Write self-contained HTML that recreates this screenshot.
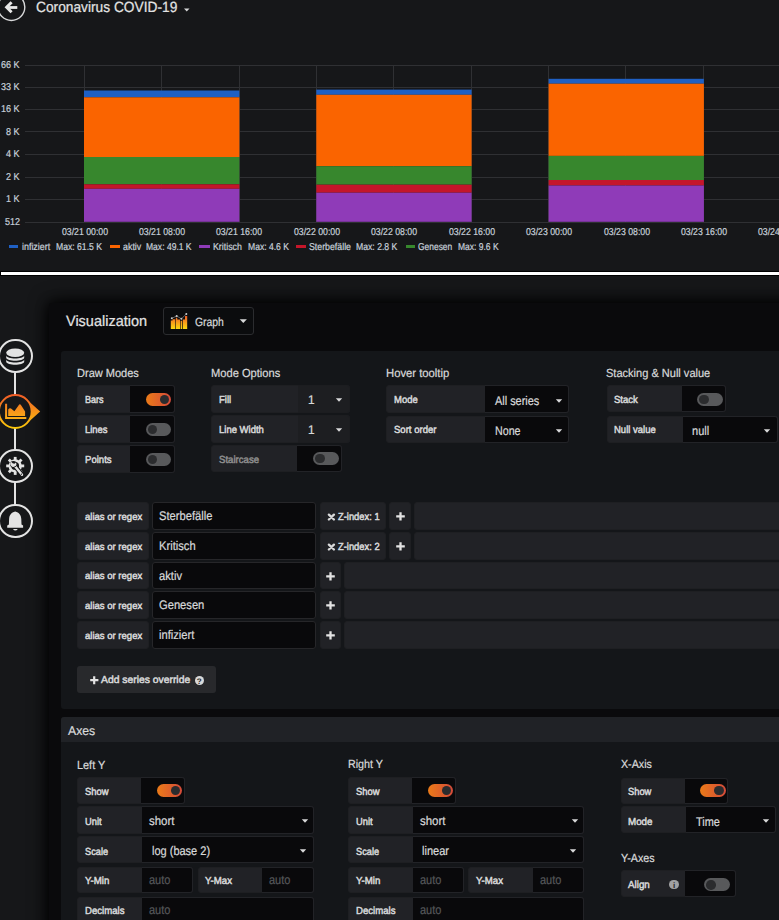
<!DOCTYPE html><html><head><meta charset="utf-8"><style>
*{box-sizing:border-box;margin:0;padding:0}
html,body{width:779px;height:920px;overflow:hidden;background:#161719;font-family:"Liberation Sans", sans-serif;color:#d8d9da}
.abs{position:absolute}
.t{position:absolute;white-space:nowrap;line-height:1;transform-origin:0 0;text-rendering:geometricPrecision}
</style></head><body>
<svg class="abs" style="left:0;top:0" width="40" height="30" viewBox="0 0 40 30"><circle cx="11.4" cy="7.1" r="13.4" fill="none" stroke="#d8d9da" stroke-width="1.4"/><path d="M11.6 2.2 L6.6 7.2 L11.6 12.2" fill="none" stroke="#e8e8e8" stroke-width="2.9" stroke-linejoin="miter" stroke-miterlimit="4"/><path d="M7.5 7.5 H17.3" fill="none" stroke="#e8e8e8" stroke-width="2.8"/></svg>
<div class="t" style="left:35.50px;top:1px;font-size:14.8px;color:#e3e3e3;transform:scaleX(0.9291);-webkit-text-stroke:0.22px #e3e3e3;">Coronavirus COVID-19</div>
<svg class="abs" style="left:183px;top:7px" width="8" height="6"><path d="M1 1.5 L6.5 1.5 L3.75 4.5 Z" fill="#d8d9da"/></svg>
<svg class="abs" style="left:0;top:0" width="779" height="270" shape-rendering="crispEdges"><rect x="25" y="65" width="754" height="1" fill="#2f3033"/><rect x="25" y="87" width="754" height="1" fill="#2f3033"/><rect x="25" y="109" width="754" height="1" fill="#2f3033"/><rect x="25" y="131" width="754" height="1" fill="#2f3033"/><rect x="25" y="154" width="754" height="1" fill="#2f3033"/><rect x="25" y="177" width="754" height="1" fill="#2f3033"/><rect x="25" y="199" width="754" height="1" fill="#2f3033"/><rect x="25" y="222" width="754" height="1" fill="#2f3033"/><rect x="84" y="65" width="1" height="157" fill="#2f3033"/><rect x="161" y="65" width="1" height="157" fill="#2f3033"/><rect x="239" y="65" width="1" height="157" fill="#2f3033"/><rect x="316" y="65" width="1" height="157" fill="#2f3033"/><rect x="393" y="65" width="1" height="157" fill="#2f3033"/><rect x="471" y="65" width="1" height="157" fill="#2f3033"/><rect x="548" y="65" width="1" height="157" fill="#2f3033"/><rect x="625" y="65" width="1" height="157" fill="#2f3033"/><rect x="703" y="65" width="1" height="157" fill="#2f3033"/></svg>
<svg class="abs" style="left:0;top:0" width="779" height="270"><rect x="84" y="90.5" width="155.40" height="6.80" fill="#1F60C4"/><rect x="84" y="97.3" width="155.40" height="59.70" fill="#FA6400"/><rect x="84" y="157" width="155.40" height="27.30" fill="#37872D"/><rect x="84" y="184.3" width="155.40" height="4.50" fill="#C4162A"/><rect x="84" y="188.8" width="155.40" height="33.00" fill="#8F3BB8"/><rect x="316.3" y="89.6" width="155.30" height="5.20" fill="#1F60C4"/><rect x="316.3" y="94.8" width="155.30" height="71.40" fill="#FA6400"/><rect x="316.3" y="166.2" width="155.30" height="18.50" fill="#37872D"/><rect x="316.3" y="184.7" width="155.30" height="8.00" fill="#C4162A"/><rect x="316.3" y="192.7" width="155.30" height="29.10" fill="#8F3BB8"/><rect x="548.6" y="78.8" width="155.30" height="4.90" fill="#1F60C4"/><rect x="548.6" y="83.7" width="155.30" height="72.20" fill="#FA6400"/><rect x="548.6" y="155.9" width="155.30" height="24.10" fill="#37872D"/><rect x="548.6" y="180" width="155.30" height="5.50" fill="#C4162A"/><rect x="548.6" y="185.5" width="155.30" height="36.30" fill="#8F3BB8"/></svg>
<div class="t" style="left:1.39px;top:61px;font-size:10px;color:#c7d0d9;transform:scaleX(0.9000);-webkit-text-stroke:0.22px #c7d0d9;">66 K</div>
<div class="t" style="left:1.39px;top:83px;font-size:10px;color:#c7d0d9;transform:scaleX(0.9000);-webkit-text-stroke:0.22px #c7d0d9;">33 K</div>
<div class="t" style="left:1.39px;top:105px;font-size:10px;color:#c7d0d9;transform:scaleX(0.9000);-webkit-text-stroke:0.22px #c7d0d9;">16 K</div>
<div class="t" style="left:6.39px;top:128px;font-size:10px;color:#c7d0d9;transform:scaleX(0.9000);-webkit-text-stroke:0.22px #c7d0d9;">8 K</div>
<div class="t" style="left:6.39px;top:150px;font-size:10px;color:#c7d0d9;transform:scaleX(0.9000);-webkit-text-stroke:0.22px #c7d0d9;">4 K</div>
<div class="t" style="left:6.39px;top:173px;font-size:10px;color:#c7d0d9;transform:scaleX(0.9000);-webkit-text-stroke:0.22px #c7d0d9;">2 K</div>
<div class="t" style="left:6.39px;top:195px;font-size:10px;color:#c7d0d9;transform:scaleX(0.9000);-webkit-text-stroke:0.22px #c7d0d9;">1 K</div>
<div class="t" style="left:4.89px;top:218px;font-size:10px;color:#c7d0d9;transform:scaleX(0.9000);-webkit-text-stroke:0.22px #c7d0d9;">512</div>
<div class="t" style="left:61.57px;top:228px;font-size:10px;color:#c7d0d9;transform:scaleX(0.8720);-webkit-text-stroke:0.22px #c7d0d9;">03/21 00:00</div>
<div class="t" style="left:139.00px;top:228px;font-size:10px;color:#c7d0d9;transform:scaleX(0.8720);-webkit-text-stroke:0.22px #c7d0d9;">03/21 08:00</div>
<div class="t" style="left:216.43px;top:228px;font-size:10px;color:#c7d0d9;transform:scaleX(0.8720);-webkit-text-stroke:0.22px #c7d0d9;">03/21 16:00</div>
<div class="t" style="left:293.86px;top:228px;font-size:10px;color:#c7d0d9;transform:scaleX(0.8720);-webkit-text-stroke:0.22px #c7d0d9;">03/22 00:00</div>
<div class="t" style="left:371.29px;top:228px;font-size:10px;color:#c7d0d9;transform:scaleX(0.8720);-webkit-text-stroke:0.22px #c7d0d9;">03/22 08:00</div>
<div class="t" style="left:448.72px;top:228px;font-size:10px;color:#c7d0d9;transform:scaleX(0.8720);-webkit-text-stroke:0.22px #c7d0d9;">03/22 16:00</div>
<div class="t" style="left:526.15px;top:228px;font-size:10px;color:#c7d0d9;transform:scaleX(0.8720);-webkit-text-stroke:0.22px #c7d0d9;">03/23 00:00</div>
<div class="t" style="left:603.58px;top:228px;font-size:10px;color:#c7d0d9;transform:scaleX(0.8720);-webkit-text-stroke:0.22px #c7d0d9;">03/23 08:00</div>
<div class="t" style="left:681.01px;top:228px;font-size:10px;color:#c7d0d9;transform:scaleX(0.8720);-webkit-text-stroke:0.22px #c7d0d9;">03/23 16:00</div>
<div class="t" style="left:758.44px;top:228px;font-size:10px;color:#c7d0d9;transform:scaleX(0.8720);-webkit-text-stroke:0.22px #c7d0d9;">03/24 00:00</div>
<div class="abs" style="left:9.2px;top:245.2px;width:9.3px;height:2.6px;background:#1F60C4;"></div>
<div class="t" style="left:22.00px;top:243px;font-size:10px;color:#c7d0d9;transform:scaleX(0.8891);-webkit-text-stroke:0.22px #c7d0d9;">infiziert</div>
<div class="t" style="left:55.90px;top:243px;font-size:10px;color:#c7d0d9;transform:scaleX(0.8615);-webkit-text-stroke:0.22px #c7d0d9;">Max: 61.5 K</div>
<div class="abs" style="left:109.8px;top:245.2px;width:10.0px;height:2.6px;background:#FA6400;"></div>
<div class="t" style="left:122.60px;top:243px;font-size:10px;color:#c7d0d9;transform:scaleX(0.8885);-webkit-text-stroke:0.22px #c7d0d9;">aktiv</div>
<div class="t" style="left:146.20px;top:243px;font-size:10px;color:#c7d0d9;transform:scaleX(0.8540);-webkit-text-stroke:0.22px #c7d0d9;">Max: 49.1 K</div>
<div class="abs" style="left:199.4px;top:245.2px;width:10.2px;height:2.6px;background:#8F3BB8;"></div>
<div class="t" style="left:213.00px;top:243px;font-size:10px;color:#c7d0d9;transform:scaleX(0.8807);-webkit-text-stroke:0.22px #c7d0d9;">Kritisch</div>
<div class="t" style="left:247.60px;top:243px;font-size:10px;color:#c7d0d9;transform:scaleX(0.8571);-webkit-text-stroke:0.22px #c7d0d9;">Max: 4.6 K</div>
<div class="abs" style="left:296.2px;top:245.2px;width:10.2px;height:2.6px;background:#C4162A;"></div>
<div class="t" style="left:309.20px;top:243px;font-size:10px;color:#c7d0d9;transform:scaleX(0.8778);-webkit-text-stroke:0.22px #c7d0d9;">Sterbefälle</div>
<div class="t" style="left:356.40px;top:243px;font-size:10px;color:#c7d0d9;transform:scaleX(0.8654);-webkit-text-stroke:0.22px #c7d0d9;">Max: 2.8 K</div>
<div class="abs" style="left:405.8px;top:245.2px;width:9.1px;height:2.6px;background:#37872D;"></div>
<div class="t" style="left:418.00px;top:243px;font-size:10px;color:#c7d0d9;transform:scaleX(0.8442);-webkit-text-stroke:0.22px #c7d0d9;">Genesen</div>
<div class="t" style="left:457.50px;top:243px;font-size:10px;color:#c7d0d9;transform:scaleX(0.8487);-webkit-text-stroke:0.22px #c7d0d9;">Max: 9.6 K</div>
<div class="abs" style="left:0px;top:271px;width:779px;height:5px;background:#000;"></div>
<div class="abs" style="left:1px;top:272px;width:778px;height:3px;background:#fff;"></div>
<div class="abs" style="left:49px;top:303px;width:760px;height:700px;background:#0a0a0c;box-shadow:0 0 20px #000, 0 0 12px rgba(0,0,0,0.7);border-radius:3px"></div>
<div class="abs" style="left:14.3px;top:373px;width:2px;height:148px;background:#e3e3e3;"></div>
<div class="abs" style="left:-2px;top:339.1px;width:34.6px;height:34.4px;border-radius:50%;border:2px solid #e3e3e3;background:#161719"></div>
<div class="abs" style="left:-2px;top:449.1px;width:34.6px;height:34.4px;border-radius:50%;border:2px solid #e3e3e3;background:#161719"></div>
<div class="abs" style="left:-2px;top:504.1px;width:34.6px;height:34.4px;border-radius:50%;border:2px solid #e3e3e3;background:#161719"></div>
<svg class="abs" style="left:0;top:390px" width="44" height="44" viewBox="0 390 44 44"><defs><linearGradient id="og" gradientUnits="userSpaceOnUse" x1="0" y1="394" x2="0" y2="429"><stop offset="0" stop-color="#f05a28"/><stop offset="1" stop-color="#fbca0a"/></linearGradient><linearGradient id="og2" gradientUnits="userSpaceOnUse" x1="0" y1="403" x2="0" y2="420"><stop offset="0" stop-color="#f47a20"/><stop offset="1" stop-color="#fbb116"/></linearGradient></defs><path d="M26.5 399.3 L40.2 411.5 L26.5 423.7 Z" fill="url(#og)"/><circle cx="15.3" cy="411.5" r="16.4" fill="#161719" stroke="url(#og)" stroke-width="2"/><path d="M5.1 403.8 H7.1 V417.1 H26.3 V419.1 H5.1 Z" fill="url(#og2)"/><path d="M8.2 416 V409.6 Q9.5 407.6 11 408.6 L14.4 411.2 L19.2 404.6 Q20 403.6 20.8 404.8 L25.1 411.6 V416 Z" fill="url(#og2)"/></svg>
<svg class="abs" style="left:0;top:337px" width="36" height="40" viewBox="0 337 36 40"><ellipse cx="15.2" cy="352.7" rx="9" ry="4.3" fill="#e3e3e3"/><path d="M6.2 355.6 C6.8 359.5 23.6 359.5 24.2 355.6 L24.2 357.7 C23.6 361.7 6.8 361.7 6.2 357.7 Z" fill="#e3e3e3"/><path d="M6.2 359.6 C6.8 363.5 23.6 363.5 24.2 359.6 L24.2 361.7 C23.6 365.7 6.8 365.7 6.2 361.7 Z" fill="#e3e3e3"/></svg>
<svg class="abs" style="left:0;top:446px" width="36" height="40" viewBox="0 446 36 40"><rect x="13.80" y="456.90" width="2.8" height="4" fill="#e3e3e3" transform="rotate(0 15.2 465.9)"/><rect x="13.80" y="456.90" width="2.8" height="4" fill="#e3e3e3" transform="rotate(45 15.2 465.9)"/><rect x="13.80" y="456.90" width="2.8" height="4" fill="#e3e3e3" transform="rotate(90 15.2 465.9)"/><rect x="13.80" y="456.90" width="2.8" height="4" fill="#e3e3e3" transform="rotate(135 15.2 465.9)"/><rect x="13.80" y="456.90" width="2.8" height="4" fill="#e3e3e3" transform="rotate(180 15.2 465.9)"/><rect x="13.80" y="456.90" width="2.8" height="4" fill="#e3e3e3" transform="rotate(225 15.2 465.9)"/><rect x="13.80" y="456.90" width="2.8" height="4" fill="#e3e3e3" transform="rotate(270 15.2 465.9)"/><rect x="13.80" y="456.90" width="2.8" height="4" fill="#e3e3e3" transform="rotate(315 15.2 465.9)"/><circle cx="15.2" cy="465.9" r="6.6" fill="#e3e3e3"/><circle cx="15.2" cy="465.9" r="3.9" fill="#161719"/><path d="M13.6 464.4 L22 474.8" stroke="#161719" stroke-width="4.6" stroke-linecap="round"/><path d="M13.6 464.4 L22 474.8" stroke="#e3e3e3" stroke-width="2.4" stroke-linecap="round"/><circle cx="13.4" cy="464.2" r="3.3" fill="#161719"/><path d="M11.2 461.8 A3 3 0 1 0 15.9 462.4 L14.4 463.8 L12.6 463.2 Z" fill="#e3e3e3"/><circle cx="21.4" cy="474.2" r="0.6" fill="#161719"/></svg>
<svg class="abs" style="left:0;top:501px" width="36" height="40" viewBox="0 501 36 40"><path d="M15.2 511.4 C11.2 512.4 9.3 515 9.1 519 L8.9 524.4 L7.2 525.4 L7.2 527.8 L23.1 527.8 L23.1 525.4 L21.5 524.4 L21.3 519 C21.1 515 19.2 512.4 15.2 511.4 Z" fill="#e3e3e3"/><path d="M12.9 528.9 L17.8 528.9 Q15.35 532.2 12.9 528.9 Z" fill="#e3e3e3"/></svg>
<div class="t" style="left:65.60px;top:314px;font-size:15px;color:#e3e3e3;transform:scaleX(0.9658);-webkit-text-stroke:0.22px #e3e3e3;">Visualization</div>
<div class="abs" style="left:163px;top:307px;width:91px;height:28px;border:1px solid #2b2c2f;border-radius:3px;background:#0b0c0e"></div>
<svg class="abs" style="left:166px;top:308px" width="26" height="24" viewBox="166 308 26 24"><defs><linearGradient id="gg" gradientUnits="userSpaceOnUse" x1="0" y1="316" x2="0" y2="329"><stop offset="0" stop-color="#f05a28"/><stop offset="0.55" stop-color="#f9a41a"/><stop offset="1" stop-color="#fbd80f"/></linearGradient></defs><path d="M170.8 329 V320.6 H172.5 V319.2 H175.2 V329 Z M175.8 329 V317.8 H177.3 V319.4 H180 V329 Z M180.6 329 V320.8 H182.1 V329 Z M182.8 329 V319.4 H185 V316 H187.2 V329 Z" fill="url(#gg)"/><path d="M171.8 318.3 L176.7 316 L181.4 318.8 L186.3 314" fill="none" stroke="#6e6f71" stroke-width="0.9"/><circle cx="171.8" cy="318.3" r="1" fill="#c8c9ca"/><circle cx="176.7" cy="316" r="1" fill="#c8c9ca"/><circle cx="181.4" cy="318.8" r="1" fill="#c8c9ca"/><circle cx="186.3" cy="314" r="1" fill="#c8c9ca"/></svg>
<div class="t" style="left:194.80px;top:316px;font-size:12px;color:#d8d9da;transform:scaleX(0.8657);-webkit-text-stroke:0.22px #d8d9da;">Graph</div>
<svg class="abs" style="left:239px;top:318px" width="9" height="7"><path d="M0.7 1.3 L7.9 1.3 L4.3 5.1 Z" fill="#d8d9da"/></svg>
<div class="abs" style="left:61px;top:351px;width:730px;height:358px;background:#141619;border-radius:3px"></div>
<div class="t" style="left:77.40px;top:368px;font-size:11.8px;color:#d8d9da;transform:scaleX(0.9341);-webkit-text-stroke:0.22px #d8d9da;">Draw Modes</div>
<div class="t" style="left:211.10px;top:368px;font-size:11.8px;color:#d8d9da;transform:scaleX(0.9428);-webkit-text-stroke:0.22px #d8d9da;">Mode Options</div>
<div class="t" style="left:386.40px;top:368px;font-size:11.8px;color:#d8d9da;transform:scaleX(0.9551);-webkit-text-stroke:0.22px #d8d9da;">Hover tooltip</div>
<div class="t" style="left:606.40px;top:368px;font-size:11.8px;color:#d8d9da;transform:scaleX(0.9352);-webkit-text-stroke:0.22px #d8d9da;">Stacking &amp; Null value</div>
<div class="abs" style="left:77px;top:385.1px;width:98.0px;height:27.6px;border-radius:3px;background:#212226;border:1px solid #1e1f22"></div>
<div class="abs" style="left:130.0px;top:385.1px;width:45.0px;height:27.6px;border-radius:0 3px 3px 0;background:#09090b;border:1px solid #222327;border-left:none"></div>
<div class="t" style="left:85.00px;top:396px;font-size:10.3px;color:#d8d9da;transform:scaleX(0.8783);-webkit-text-stroke:0.5px #d8d9da;">Bars</div>
<div class="abs" style="left:145.8px;top:392.8px;width:25.5px;height:13.3px;border-radius:7px;background:linear-gradient(90deg,#eb7b18,#d44a3a)"></div>
<div class="abs" style="left:159.8px;top:394.7px;width:9.5px;height:9.5px;border-radius:50%;background:#2b2c2e"></div>
<div class="abs" style="left:77px;top:415.1px;width:98.0px;height:27.6px;border-radius:3px;background:#212226;border:1px solid #1e1f22"></div>
<div class="abs" style="left:130.0px;top:415.1px;width:45.0px;height:27.6px;border-radius:0 3px 3px 0;background:#09090b;border:1px solid #222327;border-left:none"></div>
<div class="t" style="left:85.00px;top:426px;font-size:10.3px;color:#d8d9da;transform:scaleX(0.9136);-webkit-text-stroke:0.5px #d8d9da;">Lines</div>
<div class="abs" style="left:145.8px;top:422.8px;width:25.5px;height:13.3px;border-radius:7px;background:#58595b"></div>
<div class="abs" style="left:147.8px;top:424.7px;width:9.5px;height:9.5px;border-radius:50%;background:#2b2c2e"></div>
<div class="abs" style="left:77px;top:445.1px;width:98.0px;height:27.6px;border-radius:3px;background:#212226;border:1px solid #1e1f22"></div>
<div class="abs" style="left:130.0px;top:445.1px;width:45.0px;height:27.6px;border-radius:0 3px 3px 0;background:#09090b;border:1px solid #222327;border-left:none"></div>
<div class="t" style="left:85.00px;top:456px;font-size:10.3px;color:#d8d9da;transform:scaleX(0.9293);-webkit-text-stroke:0.5px #d8d9da;">Points</div>
<div class="abs" style="left:145.8px;top:452.8px;width:25.5px;height:13.3px;border-radius:7px;background:#58595b"></div>
<div class="abs" style="left:147.8px;top:454.7px;width:9.5px;height:9.5px;border-radius:50%;background:#2b2c2e"></div>
<div class="abs" style="left:211px;top:385.2px;width:139.0px;height:27.5px;border-radius:3px;background:#212226;border:1px solid #1e1f22"></div>
<div class="abs" style="left:297.5px;top:385.2px;width:52.5px;height:27.5px;border-radius:0 3px 3px 0;background:#1d1e21;border:1px solid #1c1d20;border-left:none"></div>
<div class="t" style="left:218.50px;top:396px;font-size:10.3px;color:#d8d9da;transform:scaleX(0.9275);-webkit-text-stroke:0.5px #d8d9da;">Fill</div>
<div class="t" style="left:308.40px;top:394px;font-size:12.5px;color:#d8d9da;transform:scaleX(0.9500);-webkit-text-stroke:0.22px #d8d9da;">1</div>
<svg class="abs" style="left:335.2px;top:396.7px" width="8" height="6"><path d="M0.8 1.2 L7.2 1.2 L4 4.8 Z" fill="#d8d9da"/></svg>
<div class="abs" style="left:211px;top:415.2px;width:139.0px;height:27.5px;border-radius:3px;background:#212226;border:1px solid #1e1f22"></div>
<div class="abs" style="left:297.5px;top:415.2px;width:52.5px;height:27.5px;border-radius:0 3px 3px 0;background:#1d1e21;border:1px solid #1c1d20;border-left:none"></div>
<div class="t" style="left:218.50px;top:426px;font-size:10.3px;color:#d8d9da;transform:scaleX(0.9226);-webkit-text-stroke:0.5px #d8d9da;">Line Width</div>
<div class="t" style="left:308.40px;top:424px;font-size:12.5px;color:#d8d9da;transform:scaleX(0.9500);-webkit-text-stroke:0.22px #d8d9da;">1</div>
<svg class="abs" style="left:335.2px;top:426.7px" width="8" height="6"><path d="M0.8 1.2 L7.2 1.2 L4 4.8 Z" fill="#d8d9da"/></svg>
<div class="abs" style="left:211px;top:445.3px;width:130.5px;height:27.2px;border-radius:3px;background:#212226;border:1px solid #1e1f22"></div>
<div class="abs" style="left:297.0px;top:445.3px;width:44.5px;height:27.2px;border-radius:0 3px 3px 0;background:#09090b;border:1px solid #222327;border-left:none"></div>
<div class="t" style="left:218.50px;top:456px;font-size:10.3px;color:#8e8e8e;transform:scaleX(0.9341);-webkit-text-stroke:0.5px #8e8e8e;">Staircase</div>
<div class="abs" style="left:313px;top:451.7px;width:25.5px;height:13.3px;border-radius:7px;background:#58595b"></div>
<div class="abs" style="left:315px;top:453.59999999999997px;width:9.5px;height:9.5px;border-radius:50%;background:#2b2c2e"></div>
<div class="abs" style="left:386.4px;top:385.2px;width:183.1px;height:27.4px;border-radius:3px;background:#212226;border:1px solid #1e1f22"></div>
<div class="abs" style="left:484.8px;top:385.2px;width:84.7px;height:27.4px;border-radius:0 3px 3px 0;background:#09090b;border:1px solid #222327;border-left:none"></div>
<div class="t" style="left:394.10px;top:396px;font-size:10.3px;color:#d8d9da;transform:scaleX(0.9200);-webkit-text-stroke:0.5px #d8d9da;">Mode</div>
<div class="t" style="left:494.80px;top:395px;font-size:12.5px;color:#d8d9da;transform:scaleX(0.8729);-webkit-text-stroke:0.22px #d8d9da;">All series</div>
<svg class="abs" style="left:554.9px;top:397.5px" width="8" height="6"><path d="M0.8 1.2 L7.2 1.2 L4 4.8 Z" fill="#d8d9da"/></svg>
<div class="abs" style="left:386.4px;top:415.5px;width:182.6px;height:27.3px;border-radius:3px;background:#212226;border:1px solid #1e1f22"></div>
<div class="abs" style="left:484.9px;top:415.5px;width:84.1px;height:27.3px;border-radius:0 3px 3px 0;background:#09090b;border:1px solid #222327;border-left:none"></div>
<div class="t" style="left:393.80px;top:426px;font-size:10.3px;color:#d8d9da;transform:scaleX(0.9281);-webkit-text-stroke:0.5px #d8d9da;">Sort order</div>
<div class="t" style="left:494.90px;top:425px;font-size:12.5px;color:#d8d9da;transform:scaleX(0.8555);-webkit-text-stroke:0.22px #d8d9da;">None</div>
<svg class="abs" style="left:555.2px;top:427.6px" width="8" height="6"><path d="M0.8 1.2 L7.2 1.2 L4 4.8 Z" fill="#d8d9da"/></svg>
<div class="abs" style="left:606.9px;top:385.3px;width:119.1px;height:27px;border-radius:3px;background:#212226;border:1px solid #1e1f22"></div>
<div class="abs" style="left:682.0px;top:385.3px;width:44.0px;height:27px;border-radius:0 3px 3px 0;background:#09090b;border:1px solid #222327;border-left:none"></div>
<div class="t" style="left:614.20px;top:396px;font-size:10.3px;color:#d8d9da;transform:scaleX(0.9270);-webkit-text-stroke:0.5px #d8d9da;">Stack</div>
<div class="abs" style="left:697.2px;top:393px;width:25.5px;height:13.3px;border-radius:7px;background:#58595b"></div>
<div class="abs" style="left:699.2px;top:394.9px;width:9.5px;height:9.5px;border-radius:50%;background:#2b2c2e"></div>
<div class="abs" style="left:606.9px;top:415.5px;width:171.6px;height:27.3px;border-radius:3px;background:#212226;border:1px solid #1e1f22"></div>
<div class="abs" style="left:683.1px;top:415.5px;width:95.4px;height:27.3px;border-radius:0 3px 3px 0;background:#09090b;border:1px solid #222327;border-left:none"></div>
<div class="t" style="left:614.10px;top:426px;font-size:10.3px;color:#d8d9da;transform:scaleX(0.9220);-webkit-text-stroke:0.5px #d8d9da;">Null value</div>
<div class="t" style="left:692.30px;top:425px;font-size:12.5px;color:#d8d9da;transform:scaleX(0.8821);-webkit-text-stroke:0.22px #d8d9da;">null</div>
<svg class="abs" style="left:763.4px;top:427.6px" width="8" height="6"><path d="M0.8 1.2 L7.2 1.2 L4 4.8 Z" fill="#d8d9da"/></svg>
<div class="abs" style="left:77px;top:502.1px;width:72px;height:27.5px;border-radius:3px;background:#212226;border:1px solid #1e1f22"></div>
<div class="t" style="left:84.90px;top:513px;font-size:10px;color:#d8d9da;transform:scaleX(0.9529);-webkit-text-stroke:0.5px #d8d9da;">alias or regex</div>
<div class="abs" style="left:152px;top:502.1px;width:164px;height:27.8px;border-radius:3px;background:#09090b;border:1px solid #262629"></div>
<div class="t" style="left:159.20px;top:510px;font-size:12.5px;color:#d8d9da;transform:scaleX(0.8935);-webkit-text-stroke:0.22px #d8d9da;">Sterbefälle</div>
<div class="abs" style="left:320px;top:502.1px;width:66px;height:27.6px;border-radius:3px;background:#212226;border:1px solid #1e1f22"></div>
<svg class="abs" style="left:326.6px;top:512.9px" width="9" height="8" viewBox="0 0 9 8"><path d="M1.9 1.6 L6.9 6.5 M6.9 1.6 L1.9 6.5" stroke="#d8d9da" stroke-width="2.3" stroke-linecap="round"/></svg>
<div class="t" style="left:337.80px;top:513px;font-size:10.3px;color:#d8d9da;transform:scaleX(0.9084);-webkit-text-stroke:0.5px #d8d9da;">Z-index: 1</div>
<div class="abs" style="left:389.2px;top:502.1px;width:21.8px;height:27.6px;border-radius:3px;background:#212226;border:1px solid #1e1f22"></div>
<svg class="abs" style="left:396px;top:512.1px" width="9" height="9" viewBox="0 0 9 9"><path d="M4.5 0.2 V8.6 M0.2 4.4 H8.8" stroke="#e3e3e3" stroke-width="2.3"/></svg>
<div class="abs" style="left:414px;top:502.1px;width:400px;height:27.6px;border-radius:3px;background:#212226;border:1px solid #1e1f22"></div>
<div class="abs" style="left:77px;top:532.0px;width:72px;height:27.5px;border-radius:3px;background:#212226;border:1px solid #1e1f22"></div>
<div class="t" style="left:84.90px;top:543px;font-size:10px;color:#d8d9da;transform:scaleX(0.9529);-webkit-text-stroke:0.5px #d8d9da;">alias or regex</div>
<div class="abs" style="left:152px;top:532.0px;width:164px;height:27.8px;border-radius:3px;background:#09090b;border:1px solid #262629"></div>
<div class="t" style="left:159.20px;top:540px;font-size:12.5px;color:#d8d9da;transform:scaleX(0.8935);-webkit-text-stroke:0.22px #d8d9da;">Kritisch</div>
<div class="abs" style="left:320px;top:532.0px;width:66px;height:27.6px;border-radius:3px;background:#212226;border:1px solid #1e1f22"></div>
<svg class="abs" style="left:326.6px;top:542.8px" width="9" height="8" viewBox="0 0 9 8"><path d="M1.9 1.6 L6.9 6.5 M6.9 1.6 L1.9 6.5" stroke="#d8d9da" stroke-width="2.3" stroke-linecap="round"/></svg>
<div class="t" style="left:337.80px;top:543px;font-size:10.3px;color:#d8d9da;transform:scaleX(0.9084);-webkit-text-stroke:0.5px #d8d9da;">Z-index: 2</div>
<div class="abs" style="left:389.2px;top:532.0px;width:21.8px;height:27.6px;border-radius:3px;background:#212226;border:1px solid #1e1f22"></div>
<svg class="abs" style="left:396px;top:542.0px" width="9" height="9" viewBox="0 0 9 9"><path d="M4.5 0.2 V8.6 M0.2 4.4 H8.8" stroke="#e3e3e3" stroke-width="2.3"/></svg>
<div class="abs" style="left:414px;top:532.0px;width:400px;height:27.6px;border-radius:3px;background:#212226;border:1px solid #1e1f22"></div>
<div class="abs" style="left:77px;top:561.5px;width:72px;height:27.5px;border-radius:3px;background:#212226;border:1px solid #1e1f22"></div>
<div class="t" style="left:84.90px;top:572px;font-size:10px;color:#d8d9da;transform:scaleX(0.9529);-webkit-text-stroke:0.5px #d8d9da;">alias or regex</div>
<div class="abs" style="left:152px;top:561.5px;width:164px;height:27.8px;border-radius:3px;background:#09090b;border:1px solid #262629"></div>
<div class="t" style="left:159.20px;top:570px;font-size:12.5px;color:#d8d9da;transform:scaleX(0.8935);-webkit-text-stroke:0.22px #d8d9da;">aktiv</div>
<div class="abs" style="left:320px;top:561.5px;width:20.8px;height:27.6px;border-radius:3px;background:#212226;border:1px solid #1e1f22"></div>
<svg class="abs" style="left:326.2px;top:571.5px" width="9" height="9" viewBox="0 0 9 9"><path d="M4.5 0.2 V8.6 M0.2 4.4 H8.8" stroke="#e3e3e3" stroke-width="2.3"/></svg>
<div class="abs" style="left:343.7px;top:561.5px;width:470px;height:27.6px;border-radius:3px;background:#212226;border:1px solid #1e1f22"></div>
<div class="abs" style="left:77px;top:591.3px;width:72px;height:27.5px;border-radius:3px;background:#212226;border:1px solid #1e1f22"></div>
<div class="t" style="left:84.90px;top:602px;font-size:10px;color:#d8d9da;transform:scaleX(0.9529);-webkit-text-stroke:0.5px #d8d9da;">alias or regex</div>
<div class="abs" style="left:152px;top:591.3px;width:164px;height:27.8px;border-radius:3px;background:#09090b;border:1px solid #262629"></div>
<div class="t" style="left:159.20px;top:599px;font-size:12.5px;color:#d8d9da;transform:scaleX(0.8935);-webkit-text-stroke:0.22px #d8d9da;">Genesen</div>
<div class="abs" style="left:320px;top:591.3px;width:20.8px;height:27.6px;border-radius:3px;background:#212226;border:1px solid #1e1f22"></div>
<svg class="abs" style="left:326.2px;top:601.3px" width="9" height="9" viewBox="0 0 9 9"><path d="M4.5 0.2 V8.6 M0.2 4.4 H8.8" stroke="#e3e3e3" stroke-width="2.3"/></svg>
<div class="abs" style="left:343.7px;top:591.3px;width:470px;height:27.6px;border-radius:3px;background:#212226;border:1px solid #1e1f22"></div>
<div class="abs" style="left:77px;top:621.3px;width:72px;height:27.5px;border-radius:3px;background:#212226;border:1px solid #1e1f22"></div>
<div class="t" style="left:84.90px;top:632px;font-size:10px;color:#d8d9da;transform:scaleX(0.9529);-webkit-text-stroke:0.5px #d8d9da;">alias or regex</div>
<div class="abs" style="left:152px;top:621.3px;width:164px;height:27.8px;border-radius:3px;background:#09090b;border:1px solid #262629"></div>
<div class="t" style="left:159.20px;top:629px;font-size:12.5px;color:#d8d9da;transform:scaleX(0.8935);-webkit-text-stroke:0.22px #d8d9da;">infiziert</div>
<div class="abs" style="left:320px;top:621.3px;width:20.8px;height:27.6px;border-radius:3px;background:#212226;border:1px solid #1e1f22"></div>
<svg class="abs" style="left:326.2px;top:631.3px" width="9" height="9" viewBox="0 0 9 9"><path d="M4.5 0.2 V8.6 M0.2 4.4 H8.8" stroke="#e3e3e3" stroke-width="2.3"/></svg>
<div class="abs" style="left:343.7px;top:621.3px;width:470px;height:27.6px;border-radius:3px;background:#212226;border:1px solid #1e1f22"></div>
<div class="abs" style="left:76.5px;top:666.2px;width:139.6px;height:26.6px;border-radius:3px;background:#28292c"></div>
<svg class="abs" style="left:89.5px;top:675.8px" width="9" height="9" viewBox="0 0 9 9"><path d="M4.2 0.2 V8.2 M0.2 4.2 H8.4" stroke="#e3e3e3" stroke-width="2.2"/></svg>
<div class="t" style="left:101.00px;top:676px;font-size:10.3px;color:#d8d9da;transform:scaleX(1.0052);-webkit-text-stroke:0.5px #d8d9da;">Add series override</div>
<div class="abs" style="left:194.5px;top:675.8px;width:9.4px;height:9.4px;border-radius:50%;background:#d8d9da"></div>
<div class="t" style="left:196.76px;top:678px;font-size:8px;font-weight:bold;color:#28292c;">?</div>
<div class="abs" style="left:61px;top:717.2px;width:730px;height:240px;background:#141619;border-radius:3px"></div>
<div class="abs" style="left:61px;top:717.2px;width:730px;height:24.8px;background:#202226;border-radius:3px 3px 0 0"></div>
<div class="t" style="left:68.10px;top:725px;font-size:12.6px;color:#d8d9da;transform:scaleX(0.9699);-webkit-text-stroke:0.22px #d8d9da;">Axes</div>
<div class="t" style="left:77.40px;top:760px;font-size:11.8px;color:#d8d9da;transform:scaleX(0.9232);-webkit-text-stroke:0.22px #d8d9da;">Left Y</div>
<div class="t" style="left:347.80px;top:759px;font-size:11.8px;color:#d8d9da;transform:scaleX(0.9087);-webkit-text-stroke:0.22px #d8d9da;">Right Y</div>
<div class="t" style="left:620.70px;top:759px;font-size:11.8px;color:#d8d9da;transform:scaleX(0.9055);-webkit-text-stroke:0.22px #d8d9da;">X-Axis</div>
<div class="t" style="left:620.70px;top:853px;font-size:11.8px;color:#d8d9da;transform:scaleX(0.9113);-webkit-text-stroke:0.22px #d8d9da;">Y-Axes</div>
<div class="abs" style="left:77.1px;top:777.3px;width:107.9px;height:27px;border-radius:3px;background:#212226;border:1px solid #1e1f22"></div>
<div class="abs" style="left:141.0px;top:777.3px;width:44.0px;height:27px;border-radius:0 3px 3px 0;background:#09090b;border:1px solid #222327;border-left:none"></div>
<div class="t" style="left:84.80px;top:788px;font-size:10.3px;color:#d8d9da;transform:scaleX(0.9150);-webkit-text-stroke:0.5px #d8d9da;">Show</div>
<div class="abs" style="left:156.7px;top:783.8px;width:25.5px;height:13.3px;border-radius:7px;background:linear-gradient(90deg,#eb7b18,#d44a3a)"></div>
<div class="abs" style="left:170.7px;top:785.6999999999999px;width:9.5px;height:9.5px;border-radius:50%;background:#2b2c2e"></div>
<div class="abs" style="left:77.1px;top:806.1px;width:236.6px;height:27.5px;border-radius:3px;background:#212226;border:1px solid #1e1f22"></div>
<div class="abs" style="left:141.8px;top:806.1px;width:171.9px;height:27.5px;border-radius:0 3px 3px 0;background:#09090b;border:1px solid #222327;border-left:none"></div>
<div class="t" style="left:84.80px;top:818px;font-size:10.3px;color:#d8d9da;transform:scaleX(0.9064);-webkit-text-stroke:0.5px #d8d9da;">Unit</div>
<div class="t" style="left:149.00px;top:815px;font-size:12.5px;color:#d8d9da;transform:scaleX(0.9165);-webkit-text-stroke:0.22px #d8d9da;">short</div>
<svg class="abs" style="left:300.8px;top:818.0px" width="8" height="6"><path d="M0.8 1.2 L7.2 1.2 L4 4.8 Z" fill="#d8d9da"/></svg>
<div class="abs" style="left:77.1px;top:836.2px;width:236.6px;height:27.2px;border-radius:3px;background:#212226;border:1px solid #1e1f22"></div>
<div class="abs" style="left:141.8px;top:836.2px;width:171.9px;height:27.2px;border-radius:0 3px 3px 0;background:#09090b;border:1px solid #222327;border-left:none"></div>
<div class="t" style="left:84.80px;top:848px;font-size:10.3px;color:#d8d9da;transform:scaleX(0.8967);-webkit-text-stroke:0.5px #d8d9da;">Scale</div>
<svg class="abs" style="left:298.6px;top:848.0px" width="8" height="6"><path d="M0.8 1.2 L7.2 1.2 L4 4.8 Z" fill="#d8d9da"/></svg>
<div class="abs" style="left:77.1px;top:866.8px;width:116.4px;height:26.7px;border-radius:3px;background:#212226;border:1px solid #1e1f22"></div>
<div class="abs" style="left:141.8px;top:866.8px;width:51.7px;height:26.7px;border-radius:0 3px 3px 0;background:#09090b;border:1px solid #222327;border-left:none"></div>
<div class="t" style="left:84.60px;top:877px;font-size:10.3px;color:#d8d9da;transform:scaleX(0.9401);-webkit-text-stroke:0.5px #d8d9da;">Y-Min</div>
<div class="t" style="left:148.80px;top:874px;font-size:12.5px;color:#55575a;transform:scaleX(0.8784);-webkit-text-stroke:0.22px #55575a;">auto</div>
<div class="abs" style="left:197.5px;top:866.8px;width:116.2px;height:26.7px;border-radius:3px;background:#212226;border:1px solid #1e1f22"></div>
<div class="abs" style="left:261.9px;top:866.8px;width:51.8px;height:26.7px;border-radius:0 3px 3px 0;background:#09090b;border:1px solid #222327;border-left:none"></div>
<div class="t" style="left:204.60px;top:877px;font-size:10.3px;color:#d8d9da;transform:scaleX(0.9372);-webkit-text-stroke:0.5px #d8d9da;">Y-Max</div>
<div class="t" style="left:268.80px;top:874px;font-size:12.5px;color:#55575a;transform:scaleX(0.8784);-webkit-text-stroke:0.22px #55575a;">auto</div>
<div class="abs" style="left:77.1px;top:896.6px;width:236.6px;height:27.5px;border-radius:3px;background:#212226;border:1px solid #1e1f22"></div>
<div class="abs" style="left:141.8px;top:896.6px;width:171.9px;height:27.5px;border-radius:0 3px 3px 0;background:#09090b;border:1px solid #222327;border-left:none"></div>
<div class="t" style="left:84.60px;top:907px;font-size:10.3px;color:#d8d9da;transform:scaleX(0.9326);-webkit-text-stroke:0.5px #d8d9da;">Decimals</div>
<div class="t" style="left:148.80px;top:904px;font-size:12.5px;color:#55575a;transform:scaleX(0.8784);-webkit-text-stroke:0.22px #55575a;">auto</div>
<div class="t" style="left:152.00px;top:845px;font-size:12.5px;color:#d8d9da;transform:scaleX(0.8797);-webkit-text-stroke:0.22px #d8d9da;">log (base 2)</div>
<div class="abs" style="left:348.0px;top:777.3px;width:107.9px;height:27px;border-radius:3px;background:#212226;border:1px solid #1e1f22"></div>
<div class="abs" style="left:411.9px;top:777.3px;width:44.0px;height:27px;border-radius:0 3px 3px 0;background:#09090b;border:1px solid #222327;border-left:none"></div>
<div class="t" style="left:355.70px;top:788px;font-size:10.3px;color:#d8d9da;transform:scaleX(0.9150);-webkit-text-stroke:0.5px #d8d9da;">Show</div>
<div class="abs" style="left:427.59999999999997px;top:783.8px;width:25.5px;height:13.3px;border-radius:7px;background:linear-gradient(90deg,#eb7b18,#d44a3a)"></div>
<div class="abs" style="left:441.59999999999997px;top:785.6999999999999px;width:9.5px;height:9.5px;border-radius:50%;background:#2b2c2e"></div>
<div class="abs" style="left:348.0px;top:806.1px;width:235.7px;height:27.5px;border-radius:3px;background:#212226;border:1px solid #1e1f22"></div>
<div class="abs" style="left:412.7px;top:806.1px;width:171.0px;height:27.5px;border-radius:0 3px 3px 0;background:#09090b;border:1px solid #222327;border-left:none"></div>
<div class="t" style="left:355.70px;top:818px;font-size:10.3px;color:#d8d9da;transform:scaleX(0.9064);-webkit-text-stroke:0.5px #d8d9da;">Unit</div>
<div class="t" style="left:419.90px;top:815px;font-size:12.5px;color:#d8d9da;transform:scaleX(0.9165);-webkit-text-stroke:0.22px #d8d9da;">short</div>
<svg class="abs" style="left:570.8px;top:818.0px" width="8" height="6"><path d="M0.8 1.2 L7.2 1.2 L4 4.8 Z" fill="#d8d9da"/></svg>
<div class="abs" style="left:348.0px;top:836.2px;width:235.7px;height:27.2px;border-radius:3px;background:#212226;border:1px solid #1e1f22"></div>
<div class="abs" style="left:412.7px;top:836.2px;width:171.0px;height:27.2px;border-radius:0 3px 3px 0;background:#09090b;border:1px solid #222327;border-left:none"></div>
<div class="t" style="left:355.70px;top:848px;font-size:10.3px;color:#d8d9da;transform:scaleX(0.8967);-webkit-text-stroke:0.5px #d8d9da;">Scale</div>
<svg class="abs" style="left:568.6px;top:848.0px" width="8" height="6"><path d="M0.8 1.2 L7.2 1.2 L4 4.8 Z" fill="#d8d9da"/></svg>
<div class="abs" style="left:348.0px;top:866.8px;width:116.4px;height:26.7px;border-radius:3px;background:#212226;border:1px solid #1e1f22"></div>
<div class="abs" style="left:412.7px;top:866.8px;width:51.7px;height:26.7px;border-radius:0 3px 3px 0;background:#09090b;border:1px solid #222327;border-left:none"></div>
<div class="t" style="left:355.50px;top:877px;font-size:10.3px;color:#d8d9da;transform:scaleX(0.9401);-webkit-text-stroke:0.5px #d8d9da;">Y-Min</div>
<div class="t" style="left:419.70px;top:874px;font-size:12.5px;color:#55575a;transform:scaleX(0.8784);-webkit-text-stroke:0.22px #55575a;">auto</div>
<div class="abs" style="left:468.4px;top:866.8px;width:115.3px;height:26.7px;border-radius:3px;background:#212226;border:1px solid #1e1f22"></div>
<div class="abs" style="left:532.8px;top:866.8px;width:50.9px;height:26.7px;border-radius:0 3px 3px 0;background:#09090b;border:1px solid #222327;border-left:none"></div>
<div class="t" style="left:475.50px;top:877px;font-size:10.3px;color:#d8d9da;transform:scaleX(0.9372);-webkit-text-stroke:0.5px #d8d9da;">Y-Max</div>
<div class="t" style="left:539.70px;top:874px;font-size:12.5px;color:#55575a;transform:scaleX(0.8784);-webkit-text-stroke:0.22px #55575a;">auto</div>
<div class="abs" style="left:348.0px;top:896.6px;width:235.7px;height:27.5px;border-radius:3px;background:#212226;border:1px solid #1e1f22"></div>
<div class="abs" style="left:412.7px;top:896.6px;width:171.0px;height:27.5px;border-radius:0 3px 3px 0;background:#09090b;border:1px solid #222327;border-left:none"></div>
<div class="t" style="left:355.50px;top:907px;font-size:10.3px;color:#d8d9da;transform:scaleX(0.9326);-webkit-text-stroke:0.5px #d8d9da;">Decimals</div>
<div class="t" style="left:419.70px;top:904px;font-size:12.5px;color:#55575a;transform:scaleX(0.8784);-webkit-text-stroke:0.22px #55575a;">auto</div>
<div class="t" style="left:422.40px;top:845px;font-size:12.5px;color:#d8d9da;transform:scaleX(0.8820);-webkit-text-stroke:0.22px #d8d9da;">linear</div>
<div class="abs" style="left:620.9px;top:777.6px;width:107.1px;height:26.6px;border-radius:3px;background:#212226;border:1px solid #1e1f22"></div>
<div class="abs" style="left:685.0px;top:777.6px;width:43.0px;height:26.6px;border-radius:0 3px 3px 0;background:#09090b;border:1px solid #222327;border-left:none"></div>
<div class="t" style="left:628.00px;top:788px;font-size:10.3px;color:#d8d9da;transform:scaleX(0.9073);-webkit-text-stroke:0.5px #d8d9da;">Show</div>
<div class="abs" style="left:700px;top:784px;width:25.5px;height:13.3px;border-radius:7px;background:linear-gradient(90deg,#eb7b18,#d44a3a)"></div>
<div class="abs" style="left:714px;top:785.9px;width:9.5px;height:9.5px;border-radius:50%;background:#2b2c2e"></div>
<div class="abs" style="left:620.9px;top:806.3px;width:155.3px;height:27px;border-radius:3px;background:#212226;border:1px solid #1e1f22"></div>
<div class="abs" style="left:685.7px;top:806.3px;width:90.5px;height:27px;border-radius:0 3px 3px 0;background:#09090b;border:1px solid #222327;border-left:none"></div>
<div class="t" style="left:628.00px;top:818px;font-size:10.3px;color:#d8d9da;transform:scaleX(0.9511);-webkit-text-stroke:0.5px #d8d9da;">Mode</div>
<div class="t" style="left:696.00px;top:816px;font-size:12.5px;color:#d8d9da;transform:scaleX(0.8739);-webkit-text-stroke:0.22px #d8d9da;">Time</div>
<svg class="abs" style="left:761.9px;top:818.0px" width="8" height="6"><path d="M0.8 1.2 L7.2 1.2 L4 4.8 Z" fill="#d8d9da"/></svg>
<div class="abs" style="left:620.9px;top:870.2px;width:115.4px;height:26.8px;border-radius:3px;background:#212226;border:1px solid #1e1f22"></div>
<div class="abs" style="left:685.0px;top:870.2px;width:51.3px;height:26.8px;border-radius:0 3px 3px 0;background:#09090b;border:1px solid #222327;border-left:none"></div>
<div class="t" style="left:628.00px;top:881px;font-size:10.3px;color:#d8d9da;transform:scaleX(0.9517);-webkit-text-stroke:0.5px #d8d9da;">Align</div>
<div class="abs" style="left:669.3px;top:879.7px;width:9.4px;height:9.4px;border-radius:50%;background:#a0a1a3"></div>
<div class="t" style="left:672.89px;top:882px;font-size:8px;font-weight:bold;color:#202226;">i</div>
<div class="abs" style="left:704px;top:878.2px;width:25.5px;height:13.3px;border-radius:7px;background:#58595b"></div>
<div class="abs" style="left:706px;top:880.1px;width:9.5px;height:9.5px;border-radius:50%;background:#2b2c2e"></div>
</body></html>
